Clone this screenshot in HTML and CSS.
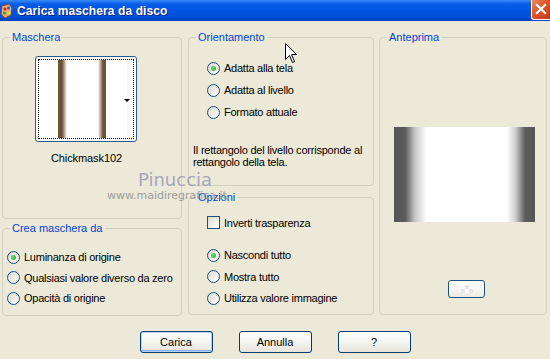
FILE: index.html
```html
<!DOCTYPE html>
<html lang="it">

<head>
    <meta charset="UTF-8">
    <title>Carica maschera da disco</title>
    <link rel="stylesheet" href="styles.css">
</head>

<body>
    <div class="window">
        <div class="titlebar">
            <svg class="app-icon" width="14" height="16" viewBox="0 0 14 16">
                <path d="M2 3 L9 1 L12 5 L11 12 L5 15 L1 11 Z" fill="#e8b070" stroke="#8a4a20" stroke-width="1"/>
                <circle cx="5" cy="6" r="1.6" fill="#e02020"/>
                <circle cx="8.5" cy="5" r="1.4" fill="#2050e0"/>
                <circle cx="4.5" cy="10" r="1.5" fill="#20a030"/>
                <circle cx="9" cy="10" r="1.3" fill="#f0e020"/>
            </svg>
            <span class="title">Carica maschera da disco</span>
            <div class="close-btn">
                <svg width="18" height="18" viewBox="0 0 18 18">
                    <path d="M5 5 L13 13 M13 5 L5 13" stroke="#fff" stroke-width="2.2" stroke-linecap="square"/>
                </svg>
            </div>
        </div>

        <div class="content">
            <div class="column col-left">
                <div class="group group-mask">
                    <span class="legend">Maschera</span>
                    <div class="mask-thumb">
                        <div class="mask-focus">
                            <div class="mask-image"></div>
                            <span class="drop-arrow"></span>
                        </div>
                    </div>
                    <div class="mask-name">Chickmask102</div>
                </div>
                <div class="group group-source">
                    <span class="legend">Crea maschera da</span>
                    <div class="options">
                        <label class="row"><span class="radio checked"></span>Luminanza di origine</label>
                        <label class="row"><span class="radio"></span>Qualsiasi valore diverso da zero</label>
                        <label class="row"><span class="radio"></span>Opacità di origine</label>
                    </div>
                </div>
            </div>

            <div class="column col-middle">
                <div class="group group-orient">
                    <span class="legend">Orientamento</span>
                    <div class="options">
                        <label class="row"><span class="radio checked"></span>Adatta alla tela</label>
                        <label class="row"><span class="radio"></span>Adatta al livello</label>
                        <label class="row"><span class="radio"></span>Formato attuale</label>
                    </div>
                    <p class="note">Il rettangolo del livello corrisponde al<br>rettangolo della tela.</p>
                </div>
                <div class="group group-options">
                    <span class="legend">Opzioni</span>
                    <div class="options">
                        <label class="row check-row"><span class="checkbox"></span>Inverti trasparenza</label>
                        <label class="row first-radio"><span class="radio checked"></span>Nascondi tutto</label>
                        <label class="row"><span class="radio"></span>Mostra tutto</label>
                        <label class="row"><span class="radio"></span>Utilizza valore immagine</label>
                    </div>
                </div>
            </div>

            <div class="column col-right">
                <div class="group group-preview">
                    <span class="legend">Anteprima</span>
                    <div class="preview"></div>
                    <div class="small-btn"><span class="checker"></span></div>
                </div>
            </div>
        </div>

        <div class="buttons">
            <button class="btn default">Carica</button>
            <button class="btn">Annulla</button>
            <button class="btn">?</button>
        </div>

        <div class="watermark">
            <div class="wm-name">Pinuccia</div>
            <div class="wm-url">www.maidiregrafica.it</div>
        </div>

        <svg class="cursor" width="13" height="21" viewBox="0 0 13 21">
            <path d="M0.5 0.5 L0.5 16.5 L4.5 12.5 L7.5 19.5 L9.5 18.5 L6.5 11.5 L11.5 11.5 Z" fill="#fff" stroke="#000" stroke-width="1"/>
        </svg>
    </div>
</body>

</html>
```

FILE: styles.css
```css
body {
    margin: 0;
    padding: 0;
    background: #ece9d8;
    font-family: 'Liberation Sans', Arial, sans-serif;
    font-size: 11px;
    color: #000;
}

.window {
    position: relative;
    width: 550px;
    height: 359px;
    overflow: hidden;
    background: #ece9d8;
}

.titlebar {
    height: 21px;
    display: flex;
    align-items: center;
    background: linear-gradient(to bottom, #3a8cf8 0%, #0a5ee8 18%, #0054e3 50%, #0050d8 80%, #0040b8 100%);
    color: #fff;
}

.app-icon {
    margin-left: 0;
    margin-right: 3px;
}

.title {
    font-weight: bold;
    font-size: 12px;
    letter-spacing: 0.1px;
    text-shadow: 1px 1px 0 #0a1e8c;
    flex: 1;
}

.close-btn {
    width: 18px;
    height: 19px;
    margin-top: -2px;
    background: linear-gradient(135deg, #f08a60 0%, #e0552c 45%, #c43a10 100%);
    border: 1px solid #fff;
    border-right: none;
    border-top: none;
    border-radius: 0 0 0 3px;
    display: flex;
    align-items: center;
    justify-content: center;
}

.content {
    display: flex;
    padding: 16px 0 0 2px;
}

.column {
    display: flex;
    flex-direction: column;
}

.col-left {
    width: 180px;
}

.col-middle {
    width: 186px;
    margin-left: 6px;
}

.col-right {
    width: 168px;
    margin-left: 5px;
}

.group {
    border: 1px solid #d0d0bf;
    border-radius: 4px;
    box-sizing: border-box;
}

.legend {
    display: block;
    width: fit-content;
    margin: -7px 0 0 7px;
    padding: 0 2px;
    height: 13px;
    line-height: 13px;
    color: #0046d5;
    background: #ece9d8;
}

.group-mask {
    height: 182px;
}

.group-source {
    height: 88px;
    margin-top: 9px;
}

.group-orient {
    height: 149px;
}

.group-options {
    height: 118px;
    margin-top: 11px;
}

.group-preview {
    height: 278px;
}

/* mask thumbnail */
.mask-thumb {
    width: 102px;
    height: 86px;
    margin: 12px 0 0 32px;
    box-sizing: border-box;
    border: 1px solid #2c5a8c;
    border-radius: 3px;
    background: #fff;
    padding: 2px;
}

.mask-focus {
    position: relative;
    height: 100%;
    box-sizing: border-box;
    border: 1px dotted #000;
}

.mask-image {
    height: 100%;
    background: linear-gradient(to right,
        #fff 0, #fff 19px,
        #6b5232 19px, #6b5232 23px, #fff 28px,
        #fff 59px, #6b5232 64px, #6b5232 67px,
        #fff 67px, #fff 88px, #f4f4f4 89px, #fff 91px);
}

.drop-arrow {
    position: absolute;
    right: 3px;
    top: 39px;
    width: 0;
    height: 0;
    border-left: 3px solid transparent;
    border-right: 3px solid transparent;
    border-top: 3px solid #000;
}

.mask-name {
    margin: 9px 0 0 48px;
    line-height: 14px;
    letter-spacing: -0.1px;
}

/* radio / checkbox rows */
.options {
    display: flex;
    flex-direction: column;
}

.row {
    display: flex;
    align-items: center;
    gap: 4px;
    height: 22px;
    white-space: nowrap;
    letter-spacing: -0.25px;
}

.radio {
    width: 11px;
    height: 11px;
    flex-shrink: 0;
    border: 1px solid #1c5180;
    border-radius: 50%;
    background: linear-gradient(135deg, #dcdad0 0%, #f2f1ea 60%, #fff 100%);
    display: flex;
    align-items: center;
    justify-content: center;
}

.radio.checked::after {
    content: "";
    width: 5px;
    height: 5px;
    border-radius: 50%;
    background: radial-gradient(circle at 40% 40%, #6fdc6f, #21a121);
}

.checkbox {
    width: 11px;
    height: 11px;
    flex-shrink: 0;
    border: 1px solid #1c5180;
    background: linear-gradient(135deg, #dcdad0 0%, #f2f1ea 60%, #fff 100%);
}

.group-source .options {
    margin: 12px 0 0 4px;
}

.group-source .row {
    height: 20.5px;
}

.group-orient .options {
    margin: 13px 0 0 18px;
}

.note {
    margin: 21px 0 0 4px;
    line-height: 12px;
    white-space: nowrap;
    letter-spacing: -0.22px;
}

.group-options .options {
    margin: 8px 0 0 18px;
}

.group-options .row {
    height: 21.5px;
}

.group-options .first-radio {
    margin-top: 11px;
}

/* preview */
.preview {
    width: 141px;
    height: 95px;
    margin: 83px 0 0 14px;
    background: linear-gradient(to right, #555 0%, #5c5c5c 8%, #c8c8c8 15%, #fff 23%, #fff 80%, #cfcfcf 86%, #5c5c5c 93%, #555 100%);
}

.small-btn {
    width: 37px;
    height: 18px;
    margin: 58px 0 0 68px;
    box-sizing: border-box;
    border: 1px solid #1c5180;
    border-radius: 3px;
    background: linear-gradient(to bottom, #fff, #ecebe6);
    display: flex;
    align-items: center;
    justify-content: center;
}

.checker {
    width: 12px;
    height: 8px;
    background: repeating-conic-gradient(#e6e6e6 0 25%, #fafafa 0 50%) 0 0 / 8px 8px;
}

/* dialog buttons */
.buttons {
    display: flex;
    justify-content: center;
    gap: 26px;
    margin-top: 15px;
}

.btn {
    width: 73px;
    height: 22px;
    padding: 0;
    border: 1px solid #003c74;
    border-radius: 3px;
    background: linear-gradient(to bottom, #fff 0%, #f4f4f0 50%, #e6e4da 100%);
    font-family: 'Liberation Sans', Arial, sans-serif;
    font-size: 11px;
    color: #000;
}

.btn.default {
    box-shadow: inset 0 0 0 1px #b8d0f8, inset 0 -1px 0 1px #89adf0;
}

/* overlays */
.watermark {
    position: absolute;
    left: 107px;
    top: 169px;
    color: #9c9cb8;
    opacity: 0.85;
    pointer-events: none;
}

.wm-name {
    margin-left: 31px;
    font-family: 'DejaVu Sans', sans-serif;
    font-size: 18px;
    line-height: 21px;
}

.wm-url {
    font-family: 'DejaVu Sans', sans-serif;
    font-size: 11px;
    line-height: 12px;
    color: #909090;
}

.cursor {
    position: absolute;
    left: 285px;
    top: 43px;
}
```
